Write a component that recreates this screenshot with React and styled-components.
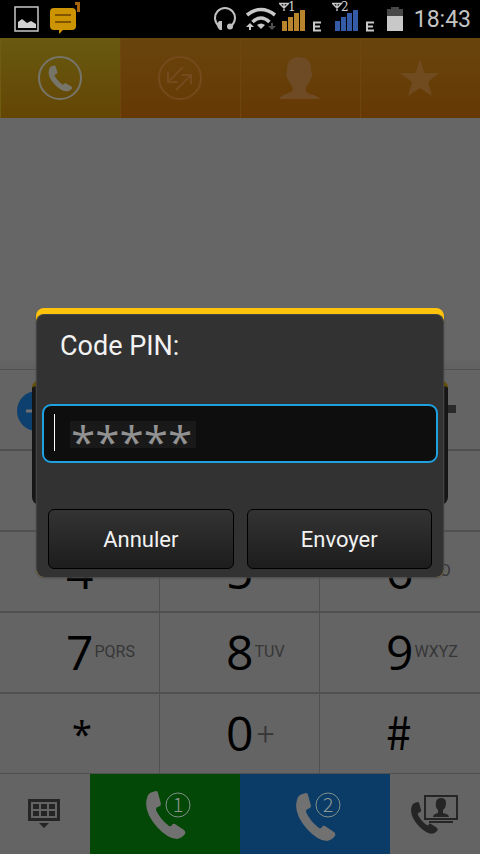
import React from "react";
import styled, { createGlobalStyle } from "styled-components";

const Global = createGlobalStyle`
  * { box-sizing: border-box; }
  body { margin: 0; background: #646464; font-family: Roboto, sans-serif; }
  button { border: 0; margin: 0; padding: 0; background: none; font: inherit; color: inherit; }
`;

const Screen = styled.div`
  position: relative;
  min-height: 100vh;
  display: flex;
  flex-direction: column;
  background: #646464;
`;

const StatusBar = styled.header`
  height: 38px;
  flex: none;
  display: flex;
  align-items: center;
  justify-content: space-between;
  padding: 0 9px 0 14px;
  background: #000;
`;

const StatusGroup = styled.div`
  display: flex;
  align-items: center;
  gap: ${(p) => p.$gap}px;
`;

const Clock = styled.time`
  font-size: 23px;
  line-height: 40px;
  padding-top: 2px;
  color: #c4c4c4;
`;

const Tabs = styled.nav`
  display: grid;
  grid-template-columns: repeat(4, 1fr);
  height: 80px;
  flex: none;
`;

const Tab = styled.button`
  && { padding-right: 2px; }
  display: flex;
  align-items: center;
  justify-content: center;
  border-left: 1px solid ${(p) => (p.$active ? "#6f5c10" : "#6d450f")};
  background: ${(p) =>
    p.$active
      ? "linear-gradient(#685a10, #644504)"
      : "linear-gradient(#68450c, #663804)"};
`;

const Display = styled.div`
  flex: 1 0 251px;
  background: linear-gradient(#666 calc(100% - 12px), #616161);
`;

const Keypad = styled.div`
  display: grid;
  grid-template-columns: repeat(3, 1fr);
  grid-template-rows: 80px;
  grid-auto-rows: 81px;
  flex: none;
`;

const EntryRow = styled.div`
  grid-column: 1 / -1;
  display: flex;
  align-items: center;
  justify-content: space-between;
  padding: 2px 24px 0 17px;
  border-top: 1px solid #505050;
`;

const Key = styled.button`
  display: flex;
  align-items: center;
  padding-left: 66px;
  border-top: 2px solid #505050;
  border-right: 1px solid #505050;
  color: #000;
  &:nth-child(3n + 1) { border-right: 0; }
`;

const Digit = styled.span`
  padding-bottom: 2px;
  font: 48px/77px "Open Sans", sans-serif;
`;

const StarSign = styled.span`
  padding-left: 6px;
  font: 36px/60px "Noto Sans", sans-serif;
`;

const HashSign = styled.span`
  padding-bottom: 6px;
  font: 46px/73px "Noto Sans CJK SC", sans-serif;
`;

const Letters = styled.span`
  padding: 0 0 2px 1px;
  font: 16px/77px Roboto, sans-serif;
  color: #363636;
`;

const PlusSign = styled(Letters)`
  padding: 2px 0 0 3px;
  font-size: 32px;
  font-weight: 300;
`;

const CallBar = styled.footer`
  display: grid;
  grid-template-columns: 3fr 5fr 5fr 3fr;
  height: 81px;
  flex: none;
  border-top: 1px solid #505050;
`;

const CallButton = styled.button`
  display: flex;
  align-items: center;
  justify-content: center;
  background: ${(p) => p.$color || "none"};
`;

const SimButton = styled(CallButton)`
  padding: 4px 0 0 6px;
`;

const Overlay = styled.div`
  position: absolute;
  inset: 0;
  display: grid;
  align-items: center;
  padding: 38px 32px 7px;
  & > * { grid-area: 1 / 1; }
`;

const BackPanel = styled.div`
  height: 125px;
  border-top: 6px solid #665000;
  border-radius: 8px;
  background: #151515;
`;

const Dialog = styled.form`
  margin: 0 4px;
  padding-top: 6px;
  border-radius: 8px;
  background: #fec40c;
  box-shadow: 0 1px 2px #4b4b4b;
`;

const DialogBody = styled.div`
  padding-bottom: 8px;
  border: 1px solid #444;
  border-bottom: 0;
  border-radius: 8px;
  background: #323232;
`;

const Title = styled.label`
  display: block;
  padding: 15px 23px 42px;
  font-size: 27px;
  line-height: 32px;
  color: #f2f2f2;
`;

const PinInput = styled.input`
  display: block;
  width: calc(100% - 10px);
  height: 59px;
  margin: 0 5px 46px;
  padding: 14px 8px 0 27px;
  border: 2px solid #1fa0e0;
  border-radius: 9px;
  outline: 0;
  font: 44px/60px "Open Sans", sans-serif;
  color: #929292;
  background:
    linear-gradient(#fff, #fff) 10px 8px / 1px 37px no-repeat,
    linear-gradient(#191919, #191919) 26px 15px / 126px 27px no-repeat,
    #0e0e0e;
`;

const Actions = styled.div`
  display: grid;
  grid-template-columns: 1fr 1fr;
  gap: 13px;
  padding: 0 11px;
`;

const ActionButton = styled.button`
  && {
    height: 60px;
    border: 1px solid #000;
    border-radius: 6px;
    background: linear-gradient(#333, #1d1d1d);
    color: #f2f2f2;
    font-size: 22px;
  }
`;

const HANDSET =
  "M2 4 Q4 1 10 0 Q12 0 12 2 L15 13 Q15 15 12 16 Q10 16 10 19 Q14 28 23 35 Q25 36 26 34 Q27 32 29 33 L38 39 Q40 41 39 43 Q36 47 31 48 Q22 48 11 36 Q-3 20 1 7 Z";

function PictureIcon() {
  return (
    <svg width="26" height="26" viewBox="0 0 26 26">
      <rect x="1" y="1" width="23" height="24" fill="none" stroke="#c8c8c8" strokeWidth="1.5" />
      <path d="M4 22V16L8 13L13 17L17 15L22 18V22Z" fill="#d0d0d0" />
    </svg>
  );
}

function MessageIcon() {
  return (
    <svg width="32" height="36" viewBox="0 0 32 36">
      <path d="M4 7H22Q26 7 26 11V25Q26 29 22 29H13L9 33V29H4Q0 29 0 25V11Q0 7 4 7Z" fill="#cc9400" />
      <path d="M5 14H21M5 21H21" stroke="#805400" strokeWidth="2" />
      <path d="M25 1H30V11H27V4H25Z" fill="#a8640c" />
    </svg>
  );
}

function HeadsetIcon() {
  return (
    <svg width="22" height="26" viewBox="0 0 22 26">
      <path d="M5 20A10 10 0 1 1 17 20" fill="none" stroke="#c0c0c0" strokeWidth="2" />
      <path d="M5 15H8V24H6Q3 22 3 18Z" fill="#c0c0c0" />
      <circle cx="16" cy="20.5" r="3" fill="#c0c0c0" />
    </svg>
  );
}

function WifiIcon() {
  return (
    <svg width="32" height="24" viewBox="0 0 32 24">
      <g fill="none" stroke="#c8c8c8" strokeWidth="3.5">
        <path d="M2 8Q16 -3 30 8" />
        <path d="M7.5 15Q16 7 24.5 15" />
      </g>
      <path d="M12 18Q16 15 20 18L16 22Z" fill="#c8c8c8" />
      <path d="M5 16L9 20H6V23H4V20H1Z" fill="#c8c8c8" />
      <path d="M27 23L23 19H26V16H28V19H31Z" fill="#505050" />
    </svg>
  );
}

const SimNumber = styled.text`
  font: 12px "DejaVu Serif", serif;
  fill: #d0d0d0;
`;

function SignalIcon({ sim, color }) {
  return (
    <svg width="44" height="38" viewBox="0 0 44 38">
      <path d="M0 3.5H10M1 4L5 8L9 4M5 4V11" fill="none" stroke="#c8c8c8" strokeWidth="1.4" />
      <SimNumber x="9" y="11">{sim}</SimNumber>
      <g fill={color}>
        <rect x="3" y="21" width="5" height="10" />
        <rect x="9" y="17" width="5" height="14" />
        <rect x="15" y="13" width="5" height="18" />
        <rect x="21" y="10" width="5" height="21" />
      </g>
      <path d="M42 22.5H35V30.5H42M35 26.5H41" fill="none" stroke="#c8c8c8" strokeWidth="2" />
    </svg>
  );
}

function BatteryIcon() {
  return (
    <svg width="16" height="24" viewBox="0 0 16 24">
      <path d="M0 2H4V0H12V2H16V9H0Z" fill="#484848" />
      <rect y="9" width="16" height="15" fill="#c8c8c8" />
    </svg>
  );
}

function DialTabIcon() {
  return (
    <svg width="44" height="44" viewBox="0 0 44 44">
      <circle cx="22" cy="22" r="21" fill="none" stroke="#77756a" strokeWidth="2" />
      <path transform="translate(10.5 9.5) scale(.6 .54)" d={HANDSET} fill="#77756a" />
    </svg>
  );
}

function HistoryTabIcon() {
  return (
    <svg width="44" height="44" viewBox="0 0 44 44" fill="none" stroke="#754a1c" strokeWidth="2">
      <circle cx="22" cy="22" r="21" />
      <path d="M25 11L10 26M10 16V26H20M18 34L33 19M24 19H33V28" />
    </svg>
  );
}

function PersonTabIcon() {
  return (
    <svg width="42" height="44" viewBox="0 0 42 44">
      <path d="M0 43Q2 39 10 37Q16 35 13 30Q10 27 9 23Q6 20 8 16Q7 2 19 1Q33 1 32 15Q35 19 31 24Q30 28 27 31Q25 36 31 38Q39 40 41 43Z" fill="#6e4b25" />
    </svg>
  );
}

function StarTabIcon() {
  return (
    <svg width="40" height="38" viewBox="0 0 40 38">
      <path d="M20 0L24.5 14H39L28 23L32 37L20 29L8 37L12 23L0 14H15.5Z" fill="#704b20" />
    </svg>
  );
}

function MinusIcon() {
  return (
    <svg width="40" height="40" viewBox="0 0 40 40">
      <circle cx="20" cy="20" r="20" fill="#0d406f" />
      <path d="M9 20H31" stroke="#707070" strokeWidth="3" />
    </svg>
  );
}

function EraseIcon() {
  return (
    <svg width="30" height="12" viewBox="0 0 30 12">
      <rect width="30" height="8" fill="#2a2a2a" />
    </svg>
  );
}

function HideKeypadIcon() {
  return (
    <svg width="34" height="30" viewBox="0 0 34 30">
      <rect x="1.5" y="1.5" width="29" height="19" fill="none" stroke="#252525" strokeWidth="3" />
      <path d="M5 5h6v5h-6zM13 5h6v5h-6zM21 5h6v5h-6zM5 12h6v5h-6zM13 12h6v5h-6zM21 12h6v5h-6zM11 24h10l-5 5z" fill="#252525" />
    </svg>
  );
}

const CircledNumber = styled.text`
  font: 300 20px "Noto Sans CJK SC", sans-serif;
  text-anchor: middle;
  fill: #8c9690;
`;

function SimCallIcon({ sim, drop }) {
  return (
    <svg width="46" height="52" viewBox="0 0 46 52">
      <path transform={`translate(1 ${drop})`} d={HANDSET} fill="#717171" />
      <circle cx="33" cy="15" r="12" fill="none" stroke="#829088" />
      <CircledNumber x="33" y="22">{sim}</CircledNumber>
    </svg>
  );
}

function VideoCallIcon() {
  return (
    <svg width="50" height="40" viewBox="0 0 50 40" fill="#252525">
      <path transform="translate(1 8) scale(.68 .66)" d={HANDSET} />
      <rect x="15" y="2" width="32" height="23" fill="#646464" stroke="#252525" strokeWidth="2" />
      <path d="M23 23Q23 20 28 19V16Q25 13 26 8Q27 4 31 4Q36 4 36 9Q36 14 33 16V19Q39 20 39 23Z" />
      <rect x="19" y="27" width="24" height="2" />
    </svg>
  );
}

const KEYS = [
  ["1", ""], ["2", "ABC"], ["3", "DEF"],
  ["4", "GHI"], ["5", "JKL"], ["6", "MNO"],
  ["7", "PQRS"], ["8", "TUV"], ["9", "WXYZ"],
  ["*", ""], ["0", "+"], ["#", ""],
];

function DialKey({ digit, letters }) {
  const Sign = digit === "*" ? StarSign : digit === "#" ? HashSign : Digit;
  const Extra = letters === "+" ? PlusSign : Letters;
  return (
    <Key type="button">
      <Sign>{digit}</Sign>
      {letters && <Extra>{letters}</Extra>}
    </Key>
  );
}

export default function App() {
  return (
    <Screen>
      <Global />
      <StatusBar>
        <StatusGroup $gap={10}>
          <PictureIcon />
          <MessageIcon />
        </StatusGroup>
        <StatusGroup $gap={11}>
          <StatusGroup $gap={9}>
            <HeadsetIcon />
            <StatusGroup $gap={2}>
              <WifiIcon />
              <SignalIcon sim="1" color="#b9852c" />
            </StatusGroup>
            <SignalIcon sim="2" color="#345aa8" />
          </StatusGroup>
          <BatteryIcon />
          <Clock>18:43</Clock>
        </StatusGroup>
      </StatusBar>
      <Tabs>
        <Tab $active aria-label="Clavier"><DialTabIcon /></Tab>
        <Tab aria-label="Journal"><HistoryTabIcon /></Tab>
        <Tab aria-label="Contacts"><PersonTabIcon /></Tab>
        <Tab aria-label="Favoris"><StarTabIcon /></Tab>
      </Tabs>
      <Display />
      <Keypad>
        <EntryRow>
          <MinusIcon />
          <EraseIcon />
        </EntryRow>
        {KEYS.map(([digit, letters]) => (
          <DialKey key={digit} digit={digit} letters={letters} />
        ))}
      </Keypad>
      <CallBar>
        <CallButton aria-label="Masquer le clavier"><HideKeypadIcon /></CallButton>
        <SimButton $color="#034806" aria-label="Appeler SIM 1"><SimCallIcon sim="1" drop={1} /></SimButton>
        <SimButton $color="#0b3c68" aria-label="Appeler SIM 2"><SimCallIcon sim="2" drop={3} /></SimButton>
        <CallButton aria-label="Appel vidéo"><VideoCallIcon /></CallButton>
      </CallBar>
      <Overlay>
        <BackPanel />
        <Dialog onSubmit={(e) => e.preventDefault()}>
          <DialogBody>
            <Title htmlFor="pin">Code PIN:</Title>
            <PinInput id="pin" type="text" defaultValue="*****" />
            <Actions>
              <ActionButton type="button">Annuler</ActionButton>
              <ActionButton type="submit">Envoyer</ActionButton>
            </Actions>
          </DialogBody>
        </Dialog>
      </Overlay>
    </Screen>
  );
}
